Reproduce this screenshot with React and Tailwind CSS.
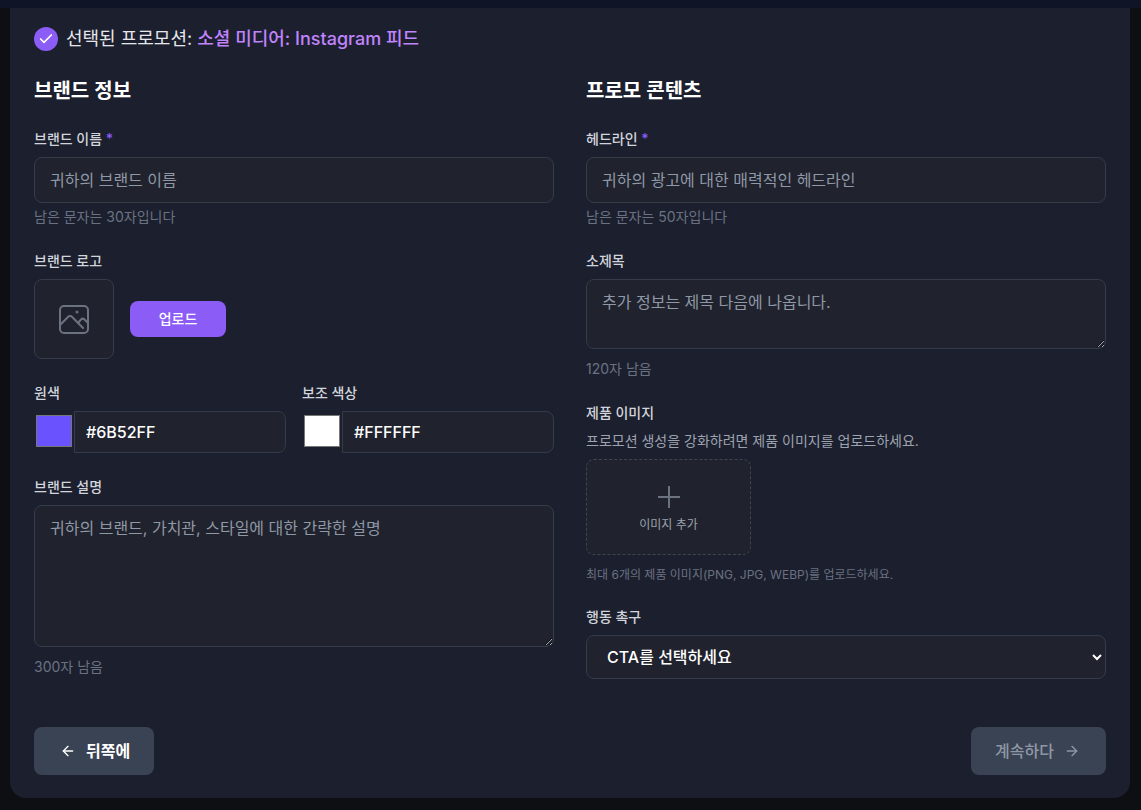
import { ArrowLeft, ArrowRight, Check } from "lucide-react";

const inputClass =
  "w-full rounded-lg border border-[#343b4b] bg-[#20222d] text-white outline-none placeholder:text-[#8e98a6]";

const Label = ({ children, required }) => (
  <label className="mb-2 block text-sm font-medium text-[#d1d5db]">
    {children}
    {required && <span className="text-[#8b5cf6]"> *</span>}
  </label>
);

const Hint = ({ children }) => <p className="mt-1 text-sm text-gray-500">{children}</p>;

const ColorField = ({ label, value }) => (
  <div>
    <Label>{label}</Label>
    <div className="flex items-start">
      <input type="color" defaultValue={value} className="h-10 w-10 shrink-0" />
      <input
        type="text"
        defaultValue={value}
        className={`${inputClass} min-w-0 flex-1 rounded-l-none px-[11px] py-2 font-medium`}
      />
    </div>
  </div>
);

export default function App() {
  return (
    <div
      className="min-h-screen bg-[#0e0f13] text-white"
      style={{ fontFamily: 'Inter, "Noto Sans CJK KR", sans-serif' }}
    >
      <div className="h-2 bg-[#0f1526]"></div>
      <div className="ml-2.5 w-[1120px] rounded-b-2xl bg-[#1c1f2e] px-6 pt-[19px] pb-[23px]">
        {/* Selected promotion */}
        <div className="mb-[26px] flex items-center gap-2 text-lg leading-6">
          <span className="flex size-6 items-center justify-center rounded-full bg-[#8b5cf6]">
            <Check className="size-4 text-white" strokeWidth={2.5} />
          </span>
          <span className="text-[#e5e7eb]">
            선택된 프로모션: <span className="font-medium text-[#c084fc]">소셜 미디어: Instagram 피드</span>
          </span>
        </div>

        <div className="grid grid-cols-2 gap-8">
          {/* Brand info */}
          <div>
            <h2 className="mb-6 text-xl font-semibold">브랜드 정보</h2>

            <div className="mb-6">
              <Label required>브랜드 이름</Label>
              <input type="text" placeholder="귀하의 브랜드 이름" className={`${inputClass} h-[46px] px-[15px]`} />
              <Hint>남은 문자는 30자입니다</Hint>
            </div>

            <div className="mb-6">
              <Label>브랜드 로고</Label>
              <div className="flex items-center gap-4">
                <div className="flex size-20 items-center justify-center rounded-lg border border-[#343b4b] bg-[#20222d]">
                  <svg
                    viewBox="0 0 30 30"
                    className="size-[30px] text-[#6b7280]"
                    fill="none"
                    stroke="currentColor"
                    strokeWidth="2"
                    strokeLinecap="round"
                    strokeLinejoin="round"
                  >
                    <rect x="1" y="2" width="28" height="27" rx="4" />
                    <path d="M1 21l8-8c1.200-1.200 3-1.200 4.200 0L24 24" />
                    <path d="M19 19l3-3.500c1-1 2.500-1 3.500 0L29 19" />
                    <circle cx="18" cy="8" r=".6" />
                  </svg>
                </div>
                <button className="h-9 w-24 rounded-lg bg-[#8b5cf6] text-sm font-medium text-white">업로드</button>
              </div>
            </div>

            <div className="mb-6 grid grid-cols-2 gap-4">
              <ColorField label="원색" value="#6B52FF" />
              <ColorField label="보조 색상" value="#FFFFFF" />
            </div>

            <div>
              <Label>브랜드 설명</Label>
              <textarea
                rows={5}
                placeholder="귀하의 브랜드, 가치관, 스타일에 대한 간략한 설명"
                className={`${inputClass} h-[142px] px-[15px] py-2.5`}
              ></textarea>
              <Hint>300자 남음</Hint>
            </div>
          </div>

          {/* Promo content */}
          <div>
            <h2 className="mb-6 text-xl font-semibold">프로모 콘텐츠</h2>

            <div className="mb-6">
              <Label required>헤드라인</Label>
              <input
                type="text"
                placeholder="귀하의 광고에 대한 매력적인 헤드라인"
                className={`${inputClass} h-[46px] px-[15px]`}
              />
              <Hint>남은 문자는 50자입니다</Hint>
            </div>

            <div className="mb-6">
              <Label>소제목</Label>
              <textarea
                rows={2}
                placeholder="추가 정보는 제목 다음에 나옵니다."
                className={`${inputClass} h-[70px] px-[15px] py-2.5`}
              ></textarea>
              <Hint>120자 남음</Hint>
            </div>

            <div className="mb-6">
              <Label>제품 이미지</Label>
              <p className="mb-2 text-sm text-[#9ca3af]">프로모션 생성을 강화하려면 제품 이미지를 업로드하세요.</p>
              <div className="flex h-24 w-[165px] flex-col items-center justify-center rounded-lg border border-dashed border-[#3d4452] bg-[#20222d] pt-1">
                <svg viewBox="0 0 24 24" className="mb-2 size-6 text-[#6b7280]" fill="none" stroke="currentColor" strokeWidth="2">
                  <path d="M12 1v22M1 12h22" />
                </svg>
                <span className="text-xs text-[#9ca3af]">이미지 추가</span>
              </div>
              <p className="mt-3 text-xs text-gray-500">최대 6개의 제품 이미지(PNG, JPG, WEBP)를 업로드하세요.</p>
            </div>

            <div>
              <Label>행동 촉구</Label>
              <select className={`${inputClass} h-11 px-4 font-medium`}>
                <option>CTA를 선택하세요</option>
              </select>
            </div>
          </div>
        </div>

        {/* Navigation */}
        <div className="mt-12 flex items-center justify-between">
          <button className="flex h-12 items-center justify-center gap-2.5 rounded-lg bg-[#3a4353] px-6 font-semibold text-white">
            <ArrowLeft className="ml-0.5 size-4" />
            뒤쪽에
          </button>
          <button className="flex h-12 items-center justify-center gap-2.5 rounded-lg bg-[#3a4353] px-6 font-medium text-[#8f97a6]">
            계속하다
            <ArrowRight className="mr-0.5 size-4" />
          </button>
        </div>
      </div>
    </div>
  );
}
